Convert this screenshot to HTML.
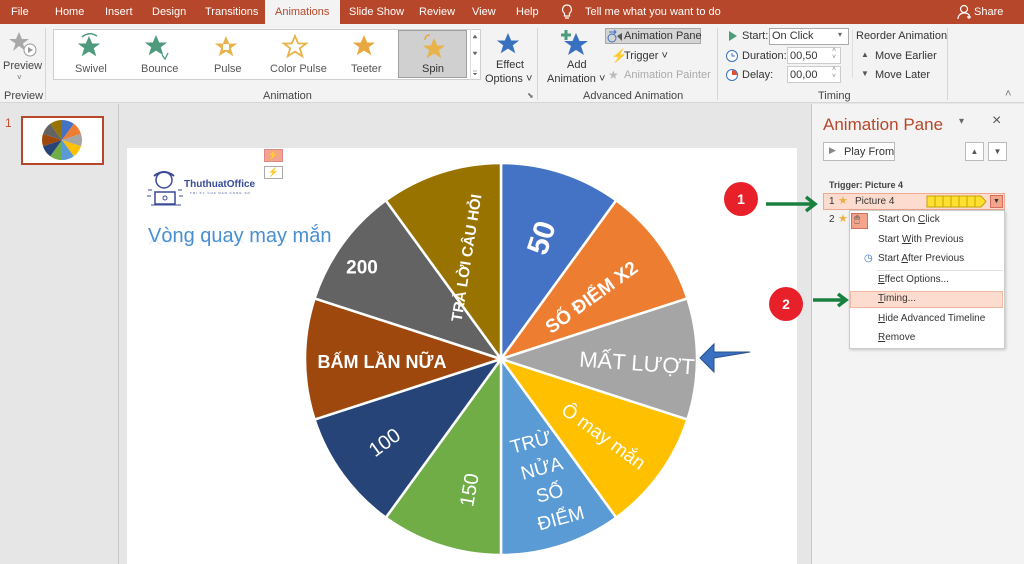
<!DOCTYPE html>
<html><head><meta charset="utf-8"><style>
*{margin:0;padding:0;box-sizing:border-box}
body{width:1024px;height:564px;overflow:hidden;background:#e6e6e6;font-family:"Liberation Sans",sans-serif;font-size:11px;color:#333;position:relative}
.a{position:absolute;white-space:nowrap}
.tab{position:absolute;top:6px;color:#fff;font-size:11px}
.u{text-decoration:underline}
</style></head><body>
<!-- title bar -->
<div class="a" style="left:0;top:0;width:1024px;height:24px;background:#b7472a"></div>
<div class="a" style="left:265px;top:0;width:75px;height:25px;background:#f3f3f3"></div>
<span class="tab" style="left:11px">File</span>
<span class="tab" style="left:55px">Home</span>
<span class="tab" style="left:105px">Insert</span>
<span class="tab" style="left:152px">Design</span>
<span class="tab" style="left:205px">Transitions</span>
<span class="tab" style="left:275px;color:#b7472a">Animations</span>
<span class="tab" style="left:349px">Slide Show</span>
<span class="tab" style="left:419px">Review</span>
<span class="tab" style="left:472px">View</span>
<span class="tab" style="left:516px">Help</span>
<svg class="a" style="left:561px;top:4px" width="12" height="16"><path d="M6 1a4.5 4.5 0 0 0-2.5 8.2V12h5V9.2A4.5 4.5 0 0 0 6 1zM4 14h4" fill="none" stroke="#fff" stroke-width="1.2"/></svg>
<span class="tab" style="left:585px">Tell me what you want to do</span>
<svg class="a" style="left:957px;top:4px" width="16" height="16"><circle cx="7" cy="5" r="3.5" fill="none" stroke="#fff" stroke-width="1.2"/><path d="M1 15c0-4 3-6 6-6s5 1 5.5 3M12 11v4M10 13h4" fill="none" stroke="#fff" stroke-width="1.2"/></svg>
<span class="tab" style="left:974px">Share</span>
<!-- ribbon -->
<div class="a" style="left:0;top:24px;width:1024px;height:79px;background:#f3f3f3;border-bottom:1px solid #d6d6d6"></div>
<svg class="a" style="left:7px;top:30px" width="30" height="28"><path d="M12 2l3 7h7l-6 4.5 2.5 7.5L12 16l-6 5 2.5-7.5L2 9h7z" fill="#a8a8a8"/><circle cx="23" cy="20" r="6" fill="#fff" stroke="#999"/><path d="M21 17v6l5-3z" fill="#999"/></svg>
<span class="a" style="left:3px;top:60px;color:#444">Preview</span>
<span class="a" style="left:17px;top:73px;font-size:8px;color:#666">˅</span>
<span class="a" style="left:4px;top:90px;color:#444">Preview</span>
<div class="a" style="left:45px;top:28px;width:1px;height:72px;background:#d6d6d6"></div>
<div class="a" style="left:53px;top:29px;width:428px;height:51px;background:#fff;border:1px solid #cfcfcf"></div>
<div class="a" style="left:398px;top:30px;width:69px;height:48px;background:#d0d0d0;border:1px solid #a0a0a0"></div>
<svg class="a" style="left:0;top:0" width="540" height="100">
<defs><path id="st" d="M0-11l3.2 7.5h8l-6.4 4.8 2.5 8L0 4.6l-7.3 4.7 2.5-8-6.4-4.8h8z"/></defs>
<use href="#st" x="89" y="47" fill="#4d9a7c"/><path d="M82 37q7-6 15-1" fill="none" stroke="#4d9a7c" stroke-width="1.5"/>
<use href="#st" x="156" y="46" fill="#4d9a7c"/><path d="M162 55l3 4 3-6" fill="none" stroke="#4d9a7c" stroke-width="1.3"/>
<use href="#st" x="226" y="47" fill="#e8b34b"/><rect x="223" y="44" width="6" height="6" fill="#fff"/>
<use href="#st" x="295" y="47" fill="none" stroke="#e8b34b" stroke-width="1.8"/>
<use href="#st" x="364" y="46" fill="#e8a840"/>
<use href="#st" x="434" y="49" fill="#e8b34b"/><path d="M425 40q0-5 5-5" fill="none" stroke="#e8a840" stroke-width="1.5"/>
<use href="#st" x="508" y="44" fill="#3a70c0"/>
<path d="M473 38l2-3 2 3zM473 52l2 3 2-3zM473 71h4M473 73l2 2 2-2" fill="#666" stroke="#666" stroke-width=".5"/>
</svg>
<div class="a" style="left:470px;top:29px;width:11px;height:51px;border-left:1px solid #ddd"></div>
<span class="a" style="left:75px;top:63px;color:#555">Swivel</span>
<span class="a" style="left:141px;top:63px;color:#555">Bounce</span>
<span class="a" style="left:214px;top:63px;color:#555">Pulse</span>
<span class="a" style="left:270px;top:63px;color:#555">Color Pulse</span>
<span class="a" style="left:351px;top:63px;color:#555">Teeter</span>
<span class="a" style="left:422px;top:63px;color:#333">Spin</span>
<span class="a" style="left:496px;top:59px;color:#333">Effect</span>
<span class="a" style="left:485px;top:73px;color:#333">Options ˅</span>
<span class="a" style="left:263px;top:90px;color:#444">Animation</span>
<span class="a" style="left:527px;top:91px;font-size:8px;color:#777">⬊</span>
<div class="a" style="left:537px;top:28px;width:1px;height:72px;background:#d6d6d6"></div>
<svg class="a" style="left:560px;top:29px" width="32" height="30"><path d="M16 4l3.5 8h8.5l-7 5 3 9L16 21l-8 5 3-9-7-5h8.5z" fill="#3a70c0"/><path d="M6 1v10M1 6h10" stroke="#4d9a7c" stroke-width="3"/></svg>
<span class="a" style="left:567px;top:59px">Add</span>
<span class="a" style="left:547px;top:73px">Animation ˅</span>
<div class="a" style="left:605px;top:28px;width:96px;height:16px;background:#d4d4d4;border:1px solid #a8a8a8"></div>
<svg class="a" style="left:607px;top:29px" width="16" height="14"><circle cx="5" cy="9" r="4" fill="none" stroke="#3a70c0"/><path d="M2 3h7M7 1l2 2-2 2" stroke="#3a70c0" fill="none"/><path d="M10 7l5-3v8z" fill="#555"/></svg>
<span class="a" style="left:624px;top:30px">Animation Pane</span>
<span class="a" style="left:611px;top:48px;color:#f0b030;font-size:13px">⚡</span>
<span class="a" style="left:624px;top:50px">Trigger ˅</span>
<span class="a" style="left:608px;top:68px;color:#bbb;font-size:12px">★</span>
<span class="a" style="left:624px;top:69px;color:#aaa">Animation Painter</span>
<span class="a" style="left:583px;top:90px;color:#444">Advanced Animation</span>
<div class="a" style="left:717px;top:28px;width:1px;height:72px;background:#d6d6d6"></div>
<svg class="a" style="left:726px;top:29px" width="14" height="56"><path d="M3 2v10l8-5z" fill="#4d9a7c"/><circle cx="6" cy="27" r="5.5" fill="#fff" stroke="#3a70c0"/><path d="M6 24v3h3" stroke="#3a70c0" fill="none"/><circle cx="6" cy="46" r="5.5" fill="#fff" stroke="#3a70c0"/><path d="M6 46V41a5 5 0 0 1 5 5z" fill="#e05030"/></svg>
<span class="a" style="left:742px;top:30px">Start:</span>
<div class="a" style="left:769px;top:28px;width:80px;height:17px;background:#fff;border:1px solid #aaa"></div>
<span class="a" style="left:772px;top:30px">On Click</span>
<span class="a" style="left:838px;top:30px;font-size:8px;color:#666">▾</span>
<span class="a" style="left:742px;top:50px">Duration:</span>
<div class="a" style="left:787px;top:47px;width:54px;height:17px;background:#fff;border:1px solid #ccc"></div>
<span class="a" style="left:790px;top:50px">00,50</span>
<span class="a" style="left:742px;top:69px">Delay:</span>
<div class="a" style="left:787px;top:66px;width:54px;height:17px;background:#fff;border:1px solid #ccc"></div>
<span class="a" style="left:790px;top:69px">00,00</span>
<span class="a" style="left:832px;top:47px;font-size:7px;color:#888;line-height:7px">˄<br>˅</span>
<span class="a" style="left:832px;top:66px;font-size:7px;color:#888;line-height:7px">˄<br>˅</span>
<div class="a" style="left:852px;top:30px;width:1px;height:48px;background:#ddd"></div>
<span class="a" style="left:856px;top:30px">Reorder Animation</span>
<span class="a" style="left:861px;top:50px;font-size:8px;color:#555">▲</span>
<span class="a" style="left:875px;top:50px">Move Earlier</span>
<span class="a" style="left:861px;top:69px;font-size:8px;color:#555">▼</span>
<span class="a" style="left:875px;top:69px">Move Later</span>
<span class="a" style="left:818px;top:90px;color:#444">Timing</span>
<div class="a" style="left:947px;top:28px;width:1px;height:72px;background:#d6d6d6"></div>
<span class="a" style="left:1005px;top:88px;color:#777">˄</span>
<!-- thumbnail pane -->
<span class="a" style="left:5px;top:116px;color:#c0502f;font-size:12px">1</span>
<div class="a" style="left:21px;top:116px;width:83px;height:49px;border:2px solid #b7472a;background:#fff"></div>
<svg class="a" style="left:40px;top:118px" width="44" height="44"><g transform="translate(22,22)">
<path d="M0 0L0-20A20 20 0 0 1 11.8-16.2z" fill="#4472c4"/><path d="M0 0L11.8-16.2A20 20 0 0 1 19-6.2z" fill="#ed7d31"/><path d="M0 0L19-6.2A20 20 0 0 1 19 6.2z" fill="#a5a5a5"/><path d="M0 0L19 6.2A20 20 0 0 1 11.8 16.2z" fill="#ffc000"/><path d="M0 0L11.8 16.2A20 20 0 0 1 0 20z" fill="#5b9bd5"/><path d="M0 0L0 20A20 20 0 0 1-11.8 16.2z" fill="#70ad47"/><path d="M0 0L-11.8 16.2A20 20 0 0 1-19 6.2z" fill="#264478"/><path d="M0 0L-19 6.2A20 20 0 0 1-19-6.2z" fill="#9e480e"/><path d="M0 0L-19-6.2A20 20 0 0 1-11.8-16.2z" fill="#636363"/><path d="M0 0L-11.8-16.2A20 20 0 0 1 0-20z" fill="#997300"/></g></svg>
<div class="a" style="left:118px;top:104px;width:1px;height:460px;background:#c8c8c8"></div>
<!-- slide -->
<div class="a" style="left:127px;top:148px;width:670px;height:416px;background:#fff"></div>
<div class="a" style="left:264px;top:149px;width:19px;height:13px;background:#f4a48a;border:1px solid #d88;font-size:9px;text-align:center;color:#a60">⚡</div>
<div class="a" style="left:264px;top:166px;width:19px;height:13px;background:#fff;border:1px solid #aaa;font-size:9px;text-align:center;color:#c90">⚡</div>
<svg class="a" style="left:146px;top:168px" width="40" height="40"><circle cx="18" cy="12" r="8" fill="none" stroke="#3a4a9a" stroke-width="1.5"/><path d="M8 8q10-8 20 0" stroke="#3a4a9a" stroke-width="2" fill="none"/><rect x="9" y="24" width="20" height="12" fill="none" stroke="#3a4a9a" stroke-width="1.5"/><circle cx="19" cy="30" r="2" fill="none" stroke="#3a4a9a"/><path d="M2 22h4M1 28h4M32 22h4M33 28h4M5 37h30" stroke="#3a4a9a"/></svg>
<span class="a" style="left:184px;top:179px;color:#3a4a9a;font-weight:bold;font-size:10px">ThuthuatOffice</span>
<span class="a" style="left:190px;top:191px;color:#3a4a9a;font-size:3px;letter-spacing:1px">TRI KY CUA DAN CONG SO</span>
<span class="a" style="left:148px;top:225px;color:#4a8fd0;font-size:20px;font-family:'Liberation Sans','DejaVu Sans',sans-serif">Vòng quay may mắn</span>
<span class="a" style="left:148px;top:246px;color:#4a8fd0;font-size:20px;opacity:.15;transform:scaleY(-0.5);transform-origin:top">Vòng quay may mắn</span>
<svg class="a" style="left:0;top:0" width="800" height="564">
<g transform="translate(501,359)" stroke="#fff" stroke-width="2.5">
<path d="M0 0L0-196A196 196 0 0 1 115.2-158.6z" fill="#4472c4"/>
<path d="M0 0L115.2-158.6A196 196 0 0 1 186.4-60.6z" fill="#ed7d31"/>
<path d="M0 0L186.4-60.6A196 196 0 0 1 186.4 60.6z" fill="#a5a5a5"/>
<path d="M0 0L186.4 60.6A196 196 0 0 1 115.2 158.6z" fill="#ffc000"/>
<path d="M0 0L115.2 158.6A196 196 0 0 1 0 196z" fill="#5b9bd5"/>
<path d="M0 0L0 196A196 196 0 0 1-115.2 158.6z" fill="#70ad47"/>
<path d="M0 0L-115.2 158.6A196 196 0 0 1-186.4 60.6z" fill="#264478"/>
<path d="M0 0L-186.4 60.6A196 196 0 0 1-186.4-60.6z" fill="#9e480e"/>
<path d="M0 0L-186.4-60.6A196 196 0 0 1-115.2-158.6z" fill="#636363"/>
<path d="M0 0L-115.2-158.6A196 196 0 0 1 0-196z" fill="#997300"/>
</g>
<g fill="#fff" font-family="Liberation Sans,DejaVu Sans,sans-serif" text-anchor="middle" dominant-baseline="central">
<text transform="translate(542,238) rotate(-72)" font-size="30" font-weight="bold">50</text>
<text transform="translate(592,298) rotate(-36)" font-size="19" font-weight="bold">SỐ ĐIỂM X2</text>
<text transform="translate(637,363) rotate(4)" font-size="22">MẤT LƯỢT</text>
<text transform="translate(603,437) rotate(36)" font-size="19">Ô may mắn</text>
<text transform="translate(531,443) rotate(-15)" font-size="19">TRỪ</text>
<text transform="translate(542,469) rotate(-15)" font-size="19">NỬA</text>
<text transform="translate(550,494) rotate(-15)" font-size="19">SỐ</text>
<text transform="translate(561,519) rotate(-15)" font-size="19">ĐIỂM</text>
<text transform="translate(470,490) rotate(-80)" font-size="20">150</text>
<text transform="translate(385,443) rotate(-36)" font-size="20">100</text>
<text transform="translate(382,362)" font-size="18" font-weight="bold">BẤM LẦN NỮA</text>
<text transform="translate(362,268)" font-size="19" font-weight="bold">200</text>
<text transform="translate(467,258) rotate(-81)" font-size="15" font-weight="bold">TRẢ LỜI CÂU HỎI</text>
</g>
<path d="M700 358l14-14v8h36l-36 6v14z" fill="#3a70c0" stroke="#2a5090"/>
</svg>
<!-- right pane -->
<div class="a" style="left:811px;top:104px;width:213px;height:460px;background:#f3f3f3;border-left:1px solid #c8c8c8"></div>
<span class="a" style="left:823px;top:115px;color:#b7472a;font-size:17px">Animation Pane</span>
<span class="a" style="left:959px;top:116px;color:#666;font-size:10px">▾</span>
<span class="a" style="left:992px;top:112px;color:#555;font-size:16px">×</span>
<div class="a" style="left:823px;top:142px;width:72px;height:19px;background:#fff;border:1px solid #bbb"></div>
<span class="a" style="left:829px;top:145px;color:#888;font-size:9px">▶</span>
<span class="a" style="left:844px;top:146px">Play From</span>
<div class="a" style="left:965px;top:142px;width:19px;height:19px;background:#fff;border:1px solid #bbb;font-size:8px;text-align:center;line-height:17px;color:#555">▲</div>
<div class="a" style="left:988px;top:142px;width:19px;height:19px;background:#fff;border:1px solid #bbb;font-size:8px;text-align:center;line-height:17px;color:#555">▼</div>
<span class="a" style="left:829px;top:180px;font-size:9px;font-weight:bold;color:#444">Trigger: Picture 4</span>
<div class="a" style="left:823px;top:193px;width:182px;height:17px;background:#fcdccf;border:1px solid #f0a890"></div>
<span class="a" style="left:829px;top:196px;font-size:10px">1</span>
<span class="a" style="left:838px;top:194px;color:#f0b040;font-size:11px">★</span>
<span class="a" style="left:855px;top:196px;font-size:10px">Picture 4</span>
<svg class="a" style="left:926px;top:195px" width="62" height="13"><path d="M1 1h54l5 5.5-5 5.5H1z" fill="#ffe030" stroke="#c8a000"/><path d="M9 1v11M17 1v11M25 1v11M33 1v11M41 1v11M49 1v11" stroke="#c8a000"/></svg>
<div class="a" style="left:990px;top:195px;width:13px;height:13px;background:#f4a48a;border:1px solid #d07060;font-size:7px;text-align:center;line-height:11px">▼</div>
<span class="a" style="left:829px;top:214px;font-size:10px">2</span>
<span class="a" style="left:838px;top:212px;color:#f0b040;font-size:11px">★</span>
<div class="a" style="left:849px;top:210px;width:156px;height:139px;background:#fff;border:1px solid #ccc;box-shadow:1px 1px 3px rgba(0,0,0,.2)"></div>
<div class="a" style="left:851px;top:213px;width:17px;height:16px;background:#f4a48a;border:1px solid #d07060"></div>
<span class="a" style="left:854px;top:214px;font-size:10px;color:#555">🖱</span>
<span class="a" style="left:864px;top:253px;color:#3a70c0;font-size:10px">◷</span>
<div class="a" style="left:877px;top:270px;width:126px;height:1px;background:#e0e0e0"></div>
<div class="a" style="left:850px;top:291px;width:153px;height:17px;background:#fcdccf;border:1px solid #f0b8a0"></div>
<span class="a" style="left:878px;top:214px;font-size:10px">Start On <span class="u">C</span>lick</span>
<span class="a" style="left:878px;top:234px;font-size:10px">Start <span class="u">W</span>ith Previous</span>
<span class="a" style="left:878px;top:253px;font-size:10px">Start <span class="u">A</span>fter Previous</span>
<span class="a" style="left:878px;top:274px;font-size:10px"><span class="u">E</span>ffect Options...</span>
<span class="a" style="left:878px;top:293px;font-size:10px"><span class="u">T</span>iming...</span>
<span class="a" style="left:878px;top:313px;font-size:10px"><span class="u">H</span>ide Advanced Timeline</span>
<span class="a" style="left:878px;top:332px;font-size:10px"><span class="u">R</span>emove</span>
<!-- annotations on top -->
<svg class="a" style="left:0;top:0" width="1024" height="564">
<circle cx="741" cy="199" r="17" fill="#e8202a"/><text x="741" y="204" fill="#fff" font-size="14" font-weight="bold" text-anchor="middle" font-family="Liberation Sans">1</text>
<circle cx="786" cy="304" r="17" fill="#e8202a"/><text x="786" y="309" fill="#fff" font-size="14" font-weight="bold" text-anchor="middle" font-family="Liberation Sans">2</text>
<path d="M766 204h48M806 197l9 7-9 7" stroke="#1a8040" stroke-width="3.5" fill="none"/>
<path d="M813 300h32M838 294l8 6-8 6" stroke="#1a8040" stroke-width="3.5" fill="none"/>
</svg>
</body></html>
